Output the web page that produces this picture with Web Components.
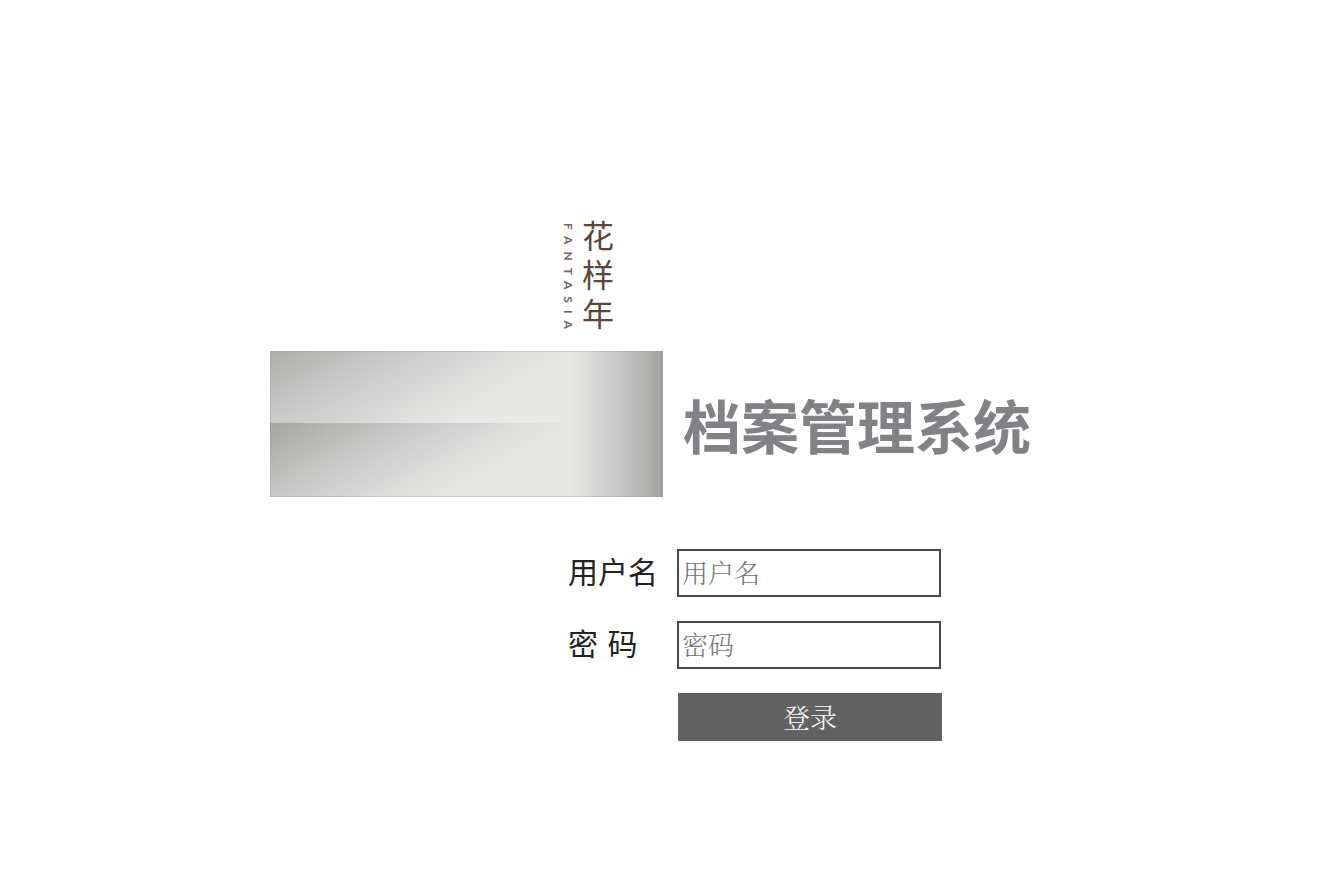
<!DOCTYPE html>
<html lang="zh-CN">
<head>
<meta charset="utf-8">
<title>档案管理系统</title>
<style>
body { margin: 0; background: #fff; font-family: "Noto Sans CJK SC", "Liberation Sans", sans-serif; }
</style>
</head>
<body>
<login-page></login-page>
<script>
class ShadowElement extends HTMLElement {
  constructor() {
    super();
    this.attachShadow({ mode: "open" }).innerHTML = this.render();
  }
}

customElements.define("brand-mark", class extends ShadowElement {
  render() {
    return `<style>
      :host { display: flex; align-items: flex-start; gap: 5px; width: max-content; color: #5b463e; }
      span { writing-mode: vertical-rl; display: block; }
      .latin { font: 700 12px/14px "Lato", sans-serif; letter-spacing: 7px; padding-top: 3px; color: #75655e; }
      .name { font-size: 32px; line-height: 36px; letter-spacing: 7px; }
    </style>
    <span class="latin">FANTASIA</span><span class="name">花样年</span>`;
  }
});

customElements.define("silver-panel", class extends ShadowElement {
  render() {
    return `<style>
      :host { display: block; height: 146px; }
      svg { display: block; width: 100%; height: 100%; }
    </style>
    <svg viewBox="0 0 393 146" preserveAspectRatio="none" aria-hidden="true">
      <defs>
        <linearGradient id="a" gradientUnits="userSpaceOnUse" x1="0" y1="0" x2="73" y2="135">
          <stop offset="0" stop-color="#adaeab"/><stop offset=".25" stop-color="#bfbfbe"/>
          <stop offset=".5" stop-color="#cfcfd0"/><stop offset=".74" stop-color="#dcdcdb"/><stop offset="1" stop-color="#e8e8e6"/>
        </linearGradient>
        <linearGradient id="b" gradientUnits="userSpaceOnUse" x1="0" y1="72" x2="73" y2="207">
          <stop offset="0" stop-color="#a4a5a2"/><stop offset=".25" stop-color="#b9b9b7"/>
          <stop offset=".52" stop-color="#cecece"/><stop offset=".76" stop-color="#dcdcdb"/><stop offset="1" stop-color="#e8e8e6"/>
        </linearGradient>
        <linearGradient id="c">
          <stop offset="0" stop-color="#e8e8e6"/><stop offset=".2" stop-color="#dcdcda"/>
          <stop offset=".45" stop-color="#cbcbcc"/><stop offset=".75" stop-color="#b9b9b7"/><stop offset="1" stop-color="#9fa09e"/>
        </linearGradient>
      </defs>
      <rect width="300" height="72" fill="url(#a)"/>
      <rect y="72" width="300" height="74" fill="url(#b)"/>
      <rect x="298" width="95" height="146" fill="url(#c)"/>
      <rect x=".5" y=".5" width="392" height="145" fill="none" stroke="#999" stroke-opacity=".35"/>
    </svg>`;
  }
});

customElements.define("form-row", class extends ShadowElement {
  static observedAttributes = ["label", "name", "type", "hint"];
  render() {
    return `<style>
      :host { display: grid; grid-template-columns: 109px 264px; align-items: start; }
      label { font: 30px/48px "DejaVu Sans", "Noto Sans CJK SC", sans-serif; color: #222; white-space: pre; }
      input { box-sizing: border-box; width: 100%; height: 48px; margin: 0; padding: 0 3px 4px; border: 2px solid #484848;
        border-radius: 0; background: #fff; color: #333; font: 300 26px/40px "Noto Serif CJK SC", "Noto Sans CJK SC", sans-serif; outline: none; }
      input::placeholder { color: #757575; opacity: 1; }
    </style>
    <label for="field"></label><input id="field">`;
  }
  attributeChangedCallback(key, old, value) {
    const input = this.shadowRoot.querySelector("input");
    if (key === "label") this.shadowRoot.querySelector("label").textContent = value;
    else if (key === "hint") input.placeholder = value;
    else input.setAttribute(key, value);
  }
});

customElements.define("login-button", class extends ShadowElement {
  render() {
    return `<style>
      :host { display: block; width: 264px; }
      button { display: block; width: 100%; height: 48px; padding: 0; border: 0; background: #626262; color: #fff;
        font: 300 27px/48px "Noto Serif CJK SC", "Noto Sans CJK SC", sans-serif; }
    </style>
    <button type="submit"><slot></slot></button>`;
  }
});

customElements.define("login-page", class extends ShadowElement {
  render() {
    return `<style>
      :host { display: block; box-sizing: border-box; max-width: 801px; margin: 0 auto; padding: 220px 0 48px; }
      header { display: grid; grid-template-columns: 393px 1fr; column-gap: 20px; align-items: center; }
      .mark { grid-column: 1 / -1; height: 131px; padding-left: 291px; }
      h1 { margin: 0; font-size: 58px; line-height: 72px; font-weight: 700; color: #818286; white-space: nowrap; }
      form { display: grid; gap: 24px; width: 374px; margin: 52px 0 0 298px; }
      login-button { justify-self: end; }
    </style>
    <header>
      <div class="mark"><brand-mark></brand-mark></div>
      <silver-panel></silver-panel>
      <h1>档案管理系统</h1>
    </header>
    <form>
      <form-row label="用户名" name="username" type="text" hint="用户名"></form-row>
      <form-row label="密 码" name="password" type="password" hint="密码"></form-row>
      <login-button>登录</login-button>
    </form>`;
  }
});
</script>
</body>
</html>
